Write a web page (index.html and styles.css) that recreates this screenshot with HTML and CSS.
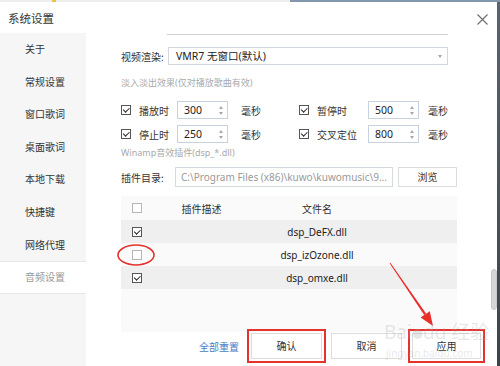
FILE: index.html
```html
<!DOCTYPE html>
<html lang="zh-CN">
<head>
	<meta charset="UTF-8">
	<title>系统设置</title>
	<link rel="stylesheet" href="styles.css">
</head>
<body>
<div class="strip"><i class="strip-mark"></i></div>
<div class="screen">
	<div class="dialog">
		<div class="titlebar">
			<span class="title">系统设置</span>
			<svg class="close" width="11" height="11" viewBox="0 0 11 11"><path d="M0.5 0.5L10.5 10.5M10.5 0.5L0.5 10.5" stroke="#6b6b6b" stroke-width="1.1" fill="none"/></svg>
		</div>
		<div class="body">
			<ul class="nav">
				<li>关于</li>
				<li>常规设置</li>
				<li>窗口歌词</li>
				<li>桌面歌词</li>
				<li>本地下载</li>
				<li>快捷键</li>
				<li>网络代理</li>
				<li class="on">音频设置</li>
			</ul>
			<div class="main">
				<div class="content">
					<div class="cut"></div>
					<div class="select-row">
						<span class="lbl">视频渲染:</span>
						<div class="select">VMR7 无窗口(默认)<i class="caret"></i></div>
					</div>
					<p class="hint">淡入淡出效果(仅对播放歌曲有效)</p>
					<div class="spin-row">
						<div class="opt">
							<span class="cb checked"></span><span class="name">播放时</span>
							<div class="spin">300<i class="up"></i><i class="down"></i></div><span class="unit">毫秒</span>
						</div>
						<div class="opt opt-b">
							<span class="cb checked"></span><span class="name">暂停时</span>
							<div class="spin">500<i class="up"></i><i class="down"></i></div><span class="unit">毫秒</span>
						</div>
					</div>
					<div class="spin-row second">
						<div class="opt">
							<span class="cb checked"></span><span class="name">停止时</span>
							<div class="spin">250<i class="up"></i><i class="down"></i></div><span class="unit">毫秒</span>
						</div>
						<div class="opt opt-b">
							<span class="cb checked"></span><span class="name">交叉定位</span>
							<div class="spin">800<i class="up"></i><i class="down"></i></div><span class="unit">毫秒</span>
						</div>
					</div>
					<p class="hint hint2">Winamp音效插件(dsp_*.dll)</p>
					<div class="dir-row">
						<span class="lbl">插件目录:</span>
						<div class="path">C:\Program Files (x86)\kuwo\kuwomusic\9...</div>
						<div class="btn browse">浏览</div>
					</div>
					<div class="table">
						<div class="tr head">
							<span class="c1"><span class="cb light"></span></span>
							<span class="c2">插件描述</span>
							<span class="c3">文件名</span>
						</div>
						<div class="tr alt">
							<span class="c1"><span class="cb checked"></span></span>
							<span class="c2"></span>
							<span class="c3">dsp_DeFX.dll</span>
						</div>
						<div class="tr">
							<span class="c1"><span class="cb light"></span></span>
							<span class="c2"></span>
							<span class="c3">dsp_izOzone.dll</span>
							<svg class="ring" width="40" height="24" viewBox="0 0 40 24"><ellipse cx="20" cy="12" rx="18" ry="10" stroke="#e5322d" stroke-width="1.6" fill="none"/></svg>
						</div>
						<div class="tr alt">
							<span class="c1"><span class="cb checked"></span></span>
							<span class="c2"></span>
							<span class="c3">dsp_omxe.dll</span>
						</div>
					</div>
					<div class="actions">
						<a class="reset">全部重置</a>
						<div class="btn mark">确认</div>
						<div class="btn">取消</div>
						<div class="btn mark">应用</div>
					</div>
				</div>
				<div class="track"><div class="thumb"></div></div>
			</div>
		</div>
	</div>
	<div class="edge"></div>
</div>

<!-- 标注：红色箭头 + 水印 -->
<svg class="arrow" width="500" height="366" viewBox="0 0 500 366">
	<polygon points="390.4,262.7 389.6,263.3 424.2,315.1 426.2,313.7" fill="#e8302b"/>
	<polygon points="433,326 420.6,317.6 429.8,311.2" fill="#e8302b"/>
</svg>
<div class="wm">
	<div class="wm-top">Bai<span class="paw">●</span>du 经验</div>
	<div class="wm-sub">jingyan.baidu.com</div>
</div>
</body>
</html>
```

FILE: styles.css
```css
*{margin:0;padding:0;box-sizing:border-box;}
html,body{width:500px;height:366px;overflow:hidden;}
body{
	position: relative;
	background-color: #4b5663;
	font-family: "Noto Sans", "Noto Sans CJK SC", sans-serif;
	font-size: 10px;
	color: #333;
}
ul{list-style: none;}

.strip{
	height: 2px;
	background: linear-gradient(to right, #eeeeee 0, #eeeeee 290px, #8397ae 290px, #8397ae 100%);
	position: relative;
}
.strip-mark{position:absolute;left:52px;top:0;width:4px;height:2px;background:#e9c34a;}

.screen{display:flex;height:364px;}
.dialog{
	width: 497px;
	background-color: #fff;
	display: flex;
	flex-direction: column;
}
.edge{flex:1;background:linear-gradient(#5a6470,#3a434d);}

/* 标题栏 */
.titlebar{
	height: 31px;
	display: flex;
	align-items: center;
	justify-content: space-between;
	padding: 0 9px 0 8px;
}
.title{font-size:11.5px;color:#333;font-family:"Noto Sans CJK SC",sans-serif;}
.close{display:block;margin-top:3px;}

.body{flex:1;display:flex;}

/* 左侧菜单 */
.nav{
	width: 86px;
	background-color: #f6f6f6;
	font-family: "Noto Sans CJK SC", sans-serif;
}
.nav li{
	height: 32.6px;
	line-height: 32.6px;
	padding-left: 25px;
	color: #333;
}
.nav li.on{
	background-color: #fff;
	color: #9a9a9a;
	border-top: 1px solid #e6e6e6;
	border-bottom: 1px solid #e6e6e6;
	line-height: 30.6px;
}

.main{flex:1;display:flex;}
.content{flex:1;padding-left:35px;}
.track{width:6px;}
.thumb{
	margin-top: 236px;
	height: 41px;
	background-color: #d6d6d6;
	border: 1px solid #c9c9c9;
	border-radius: 3px;
}

.cut{
	margin: 1px 0 0 46px;
	width: 281px;
	height: 1px;
	background-color: #d3d3d3;
}
.lbl{font-family:"Noto Sans CJK SC",sans-serif;color:#333;}

.select-row{
	margin-top: 12px;
	height: 18px;
	display: flex;
	align-items: center;
}
.select-row .lbl{width:47px;}
.select{
	position: relative;
	width: 280px;
	height: 18px;
	line-height: 16px;
	border: 1px solid #d2d8df;
	padding-left: 7px;
	color: #222;
	font-size: 10.5px;
}
.caret{
	position: absolute;
	right: 5px;
	top: 7px;
	border-left: 2.5px solid transparent;
	border-right: 2.5px solid transparent;
	border-top: 3px solid #a5a5a5;
}

.hint{
	margin-top: 11px;
	line-height: 14px;
	height: 14px;
	font-size: 9px;
	color: #aaa;
}
.hint2{margin-top:3px;}

.spin-row{
	margin-top: 11px;
	height: 18px;
	display: flex;
	align-items: center;
}
.spin-row.second{margin-top:6px;}
.opt{width:178px;display:flex;align-items:center;}
.opt .name{width:38px;margin-left:8px;font-family:"Noto Sans CJK SC",sans-serif;}
.opt-b .name{width:51px;}
.opt .unit{margin-left:13px;font-family:"Noto Sans CJK SC",sans-serif;}
.opt-b .unit{margin-left:9px;}
.spin{
	position: relative;
	width: 51px;
	height: 18px;
	line-height: 17px;
	border: 1px solid #c7d2de;
	padding-left: 6px;
	font-size: 10.5px;
	color: #222;
}
.spin .up,.spin .down{
	position: absolute;
	right: 4px;
	border-left: 2.5px solid transparent;
	border-right: 2.5px solid transparent;
}
.spin .up{top:4px;border-bottom:3px solid #a8a8a8;}
.spin .down{top:10px;border-top:3px solid #a8a8a8;}

/* 复选框 */
.cb{
	position: relative;
	display: block;
	width: 10px;
	height: 10px;
	border: 1px solid #555;
	background-color: #fff;
}
.cb.light{border-color:#b5b5b5;}
.cb.checked:after{
	content: "";
	position: absolute;
	width: 5px;
	height: 3px;
	border-left: 1.5px solid #222;
	border-bottom: 1.5px solid #222;
	transform: rotate(-45deg);
	transform-origin: 3px 3px;
	top: 1px;
	left: 2px;
}

.dir-row{
	margin-top: 7px;
	height: 20px;
	display: flex;
	align-items: center;
}
.dir-row .lbl{width:54px;}
.path{
	width: 218px;
	height: 20px;
	line-height: 18px;
	border: 1px solid #d4dae0;
	padding-left: 5px;
	color: #9a9a9a;
	font-size: 10px;
	white-space: nowrap;
	overflow: hidden;
}
.btn{
	height: 26px;
	line-height: 24px;
	border: 1px solid #dcdcdc;
	background-color: #fff;
	text-align: center;
	font-family: "Noto Sans CJK SC", sans-serif;
	color: #333;
	width: 70px;
}
.browse{width:59px;height:20px;line-height:18px;margin-left:5px;}

/* 插件列表 */
.table{
	margin-top: 9px;
	width: 336px;
	height: 136px;
	background-color: #fafafa;
}
.tr{
	position: relative;
	display: grid;
	grid-template-columns: 40px 81px 150px 1fr;
	align-items: center;
	height: 23px;
}
.tr.head{height:24px;}
.tr.alt{background-color:#efefef;}
.c1{padding-left:11px;}
.c2,.c3{text-align:center;}
.c2{font-family:"Noto Sans CJK SC",sans-serif;}
.c3{color:#222;font-size:10px;}
.head .c3{font-family:"Noto Sans CJK SC",sans-serif;color:#333;}
.ring{position:absolute;left:-5px;top:0;}

.actions{
	margin-top: 1px;
	height: 26px;
	display: flex;
	align-items: center;
	justify-content: flex-end;
	padding-right: 10px;
}
.reset{
	color: #4a7bc4;
	font-family: "Noto Sans CJK SC", sans-serif;
	margin-right: 12px;
}
.actions .btn{width:71px;margin-right:9px;}
.actions .btn:last-child{margin-right:0;width:69px;margin-left:1px;}
.btn.mark{outline:2px solid #e5322d;outline-offset:2px;}

/* 标注层 */
.arrow{position:absolute;left:0;top:0;pointer-events:none;}
.wm{
	position: absolute;
	left: 384px;
	top: 321px;
	color: rgba(170,170,170,0.28);
	pointer-events: none;
}
.wm-top{font-size:19px;line-height:22px;font-family:"Noto Sans","Noto Sans CJK SC",sans-serif;}
.paw{font-size:11px;vertical-align:middle;}
.wm-sub{font-size:10px;line-height:12px;margin:2px 0 0 2px;}
```
